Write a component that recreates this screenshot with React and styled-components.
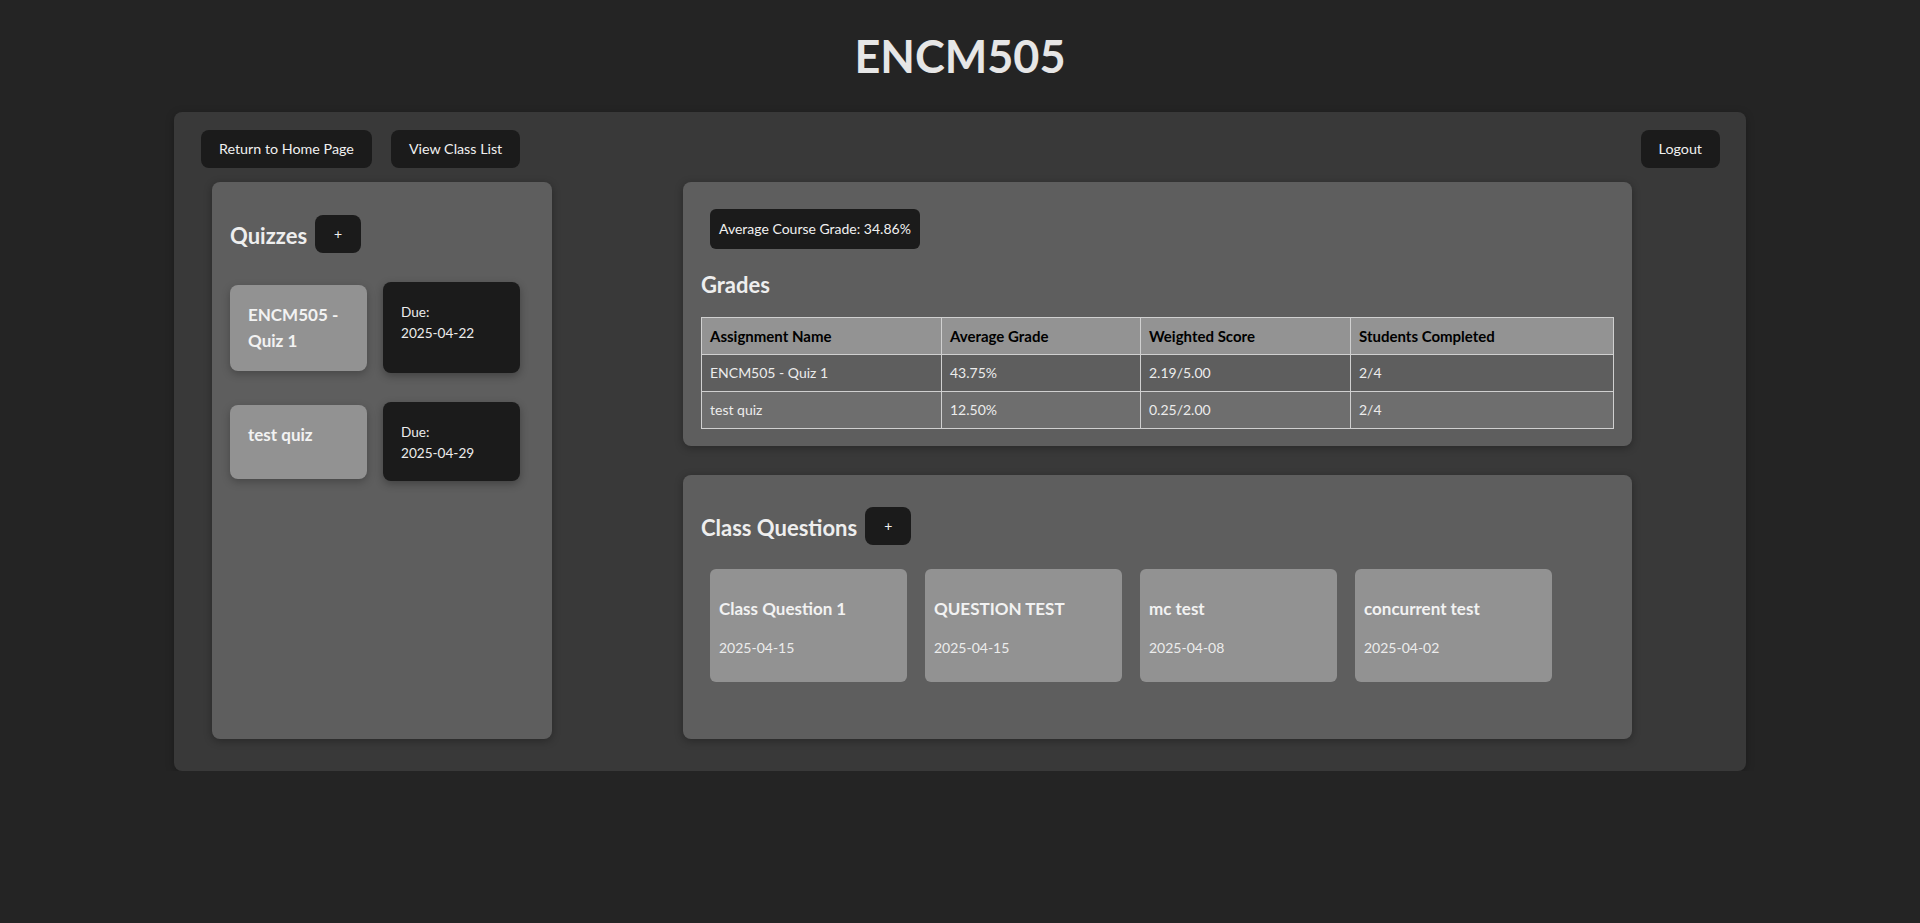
import React from "react";
import styled, { createGlobalStyle } from "styled-components";

const GlobalStyle = createGlobalStyle`
  html, body {
    margin: 0;
    padding: 0;
    background: #242424;
  }
  body {
    font-family: Lato, "Open Sans", Arial, sans-serif;
    color: #e8e8e8;
  }
  * { box-sizing: border-box; }
`;

const Header = styled.header`
  padding-top: 33px;
  height: 112px;
  text-align: center;
`;

const Title = styled.h1`
  margin: 0;
  font-size: 45px;
  line-height: 47px;
  font-weight: 700;
  color: #e6e6e6;
`;

const Shell = styled.main`
  width: 1572px;
  margin: 0 auto;
  background: #393939;
  border-radius: 8px;
  padding: 18px 26px 32px 27px;
  box-shadow: 0 2px 8px rgba(0, 0, 0, 0.25);
`;

const TopBar = styled.div`
  display: flex;
  justify-content: space-between;
  align-items: center;
`;

const ButtonGroup = styled.div`
  display: flex;
  gap: 19px;
`;

const DarkButton = styled.button`
  font-family: inherit;
  font-size: ${(p) => (p.$small ? "14px" : "14.3px")};
  line-height: 20px;
  height: 38px;
  padding: 0 ${(p) => (p.$small ? "19px" : "18px")};
  background: #1b1b1b;
  color: #f0f0f0;
  border: none;
  border-radius: 8px;
  cursor: pointer;
`;

const Content = styled.div`
  display: flex;
  align-items: stretch;
  margin-top: 14px;
  padding-left: 11px;
  gap: 131px;
`;

const Panel = styled.section`
  background: #5e5e5e;
  border-radius: 8px;
  box-shadow: 0 2px 8px rgba(0, 0, 0, 0.3);
`;

const QuizPanel = styled(Panel)`
  width: 340px;
  padding: 33px 18px 18px 18px;
`;

const RightColumn = styled.div`
  width: 949px;
  display: flex;
  flex-direction: column;
  gap: 29px;
`;

const GradesPanel = styled(Panel)`
  padding: 18px 18px 17px 18px;
  display: flex;
  flex-direction: column;
  align-items: flex-start;
`;

const QuestionsPanel = styled(Panel)`
  padding: 32px 18px 48px 18px;
`;

const SectionHeader = styled.div`
  display: flex;
  align-items: center;
  gap: 8px;
`;

const SectionTitle = styled.h2`
  margin: 0;
  padding-top: ${(p) => (p.$inHeader ? "3px" : "0")};
  font-size: 22px;
  line-height: 24px;
  font-weight: 700;
  color: #eeeeee;
`;

const QuizList = styled.div`
  display: flex;
  flex-direction: column;
  gap: 29px;
  margin-top: 29px;
`;

const QuizRow = styled.div`
  display: flex;
  align-items: stretch;
  gap: 16px;
`;

const QuizCard = styled.div`
  width: 137px;
  margin: 2.5px 0;
  padding: 17px 18px;
  background: #929292;
  border-radius: 8px;
  box-shadow: 0 3px 8px rgba(0, 0, 0, 0.25);
`;

const QuizTitle = styled.h3`
  margin: 0;
  font-size: 17px;
  line-height: 26px;
  font-weight: 700;
  color: #f2f2f2;
`;

const DueBox = styled.div`
  width: 137px;
  padding: 20px 18px 17px 18px;
  background: #1b1b1b;
  border-radius: 8px;
  box-shadow: 0 3px 8px rgba(0, 0, 0, 0.3);
  font-size: 13.6px;
  line-height: 21px;
  color: #ececec;
`;

const Line = styled.span`
  display: block;
`;

const AverageBadge = styled.div`
  margin: 9px;
  padding: 10px 9px;
  background: #1b1b1b;
  border-radius: 6px;
  font-size: 14px;
  line-height: 20px;
  color: #f0f0f0;
`;

const GradesTitle = styled(SectionTitle)`
  margin-top: 15px;
  margin-bottom: 20px;
`;

const Table = styled.table`
  width: 100%;
  border-collapse: collapse;
  font-size: 14px;
  line-height: 20px;
`;

const Th = styled.th`
  width: ${(p) => p.$w}px;
  text-align: left;
  padding: 8px;
  background: #939393;
  color: #000;
  font-size: 15px;
  font-weight: 700;
  border: 1px solid #d0d0d0;
`;

const Tr = styled.tr`
  background: ${(p) => (p.$alt ? "#6e6e6e" : "#5e5e5e")};
`;

const Td = styled.td`
  padding: 8px;
  color: #ececec;
  border: 1px solid #d0d0d0;
`;

const CardWrap = styled.div`
  display: flex;
  flex-wrap: wrap;
  margin-top: 15px;
`;

const QuestionCard = styled.div`
  width: 197px;
  margin: 9px;
  padding: 10px 9px;
  background: #929292;
  border-radius: 6px;
`;

const QuestionTitle = styled.h3`
  margin: 18px 0;
  font-size: 17px;
  line-height: 23px;
  font-weight: 700;
  color: #f2f2f2;
`;

const QuestionDate = styled.p`
  margin: 0 0 14px 0;
  font-size: 14px;
  line-height: 20px;
  color: #ececec;
`;

const quizzes = [
  { title: "ENCM505 - Quiz 1", due: "2025-04-22" },
  { title: "test quiz", due: "2025-04-29" },
];

const grades = [
  { name: "ENCM505 - Quiz 1", avg: "43.75%", weighted: "2.19/5.00", done: "2/4" },
  { name: "test quiz", avg: "12.50%", weighted: "0.25/2.00", done: "2/4" },
];

const questions = [
  { title: "Class Question 1", date: "2025-04-15" },
  { title: "QUESTION TEST", date: "2025-04-15" },
  { title: "mc test", date: "2025-04-08" },
  { title: "concurrent test", date: "2025-04-02" },
];

export default function App() {
  return (
    <>
      <GlobalStyle />
      <Header>
        <Title>ENCM505</Title>
      </Header>
      <Shell>
        <TopBar>
          <ButtonGroup>
            <DarkButton>Return to Home Page</DarkButton>
            <DarkButton>View Class List</DarkButton>
          </ButtonGroup>
          <DarkButton>Logout</DarkButton>
        </TopBar>
        <Content>
          <QuizPanel>
            <SectionHeader>
              <SectionTitle $inHeader>Quizzes</SectionTitle>
              <DarkButton $small>+</DarkButton>
            </SectionHeader>
            <QuizList>
              {quizzes.map((q) => (
                <QuizRow key={q.title}>
                  <QuizCard>
                    <QuizTitle>{q.title}</QuizTitle>
                  </QuizCard>
                  <DueBox>
                    <Line>Due:</Line>
                    <Line>{q.due}</Line>
                  </DueBox>
                </QuizRow>
              ))}
            </QuizList>
          </QuizPanel>
          <RightColumn>
            <GradesPanel>
              <AverageBadge>Average Course Grade: 34.86%</AverageBadge>
              <GradesTitle>Grades</GradesTitle>
              <Table>
                <thead>
                  <tr>
                    <Th $w={240}>Assignment Name</Th>
                    <Th $w={199}>Average Grade</Th>
                    <Th $w={210}>Weighted Score</Th>
                    <Th $w={263}>Students Completed</Th>
                  </tr>
                </thead>
                <tbody>
                  {grades.map((g, i) => (
                    <Tr key={g.name} $alt={i % 2 === 1}>
                      <Td>{g.name}</Td>
                      <Td>{g.avg}</Td>
                      <Td>{g.weighted}</Td>
                      <Td>{g.done}</Td>
                    </Tr>
                  ))}
                </tbody>
              </Table>
            </GradesPanel>
            <QuestionsPanel>
              <SectionHeader>
                <SectionTitle $inHeader>Class Questions</SectionTitle>
                <DarkButton $small>+</DarkButton>
              </SectionHeader>
              <CardWrap>
                {questions.map((q) => (
                  <QuestionCard key={q.title}>
                    <QuestionTitle>{q.title}</QuestionTitle>
                    <QuestionDate>{q.date}</QuestionDate>
                  </QuestionCard>
                ))}
              </CardWrap>
            </QuestionsPanel>
          </RightColumn>
        </Content>
      </Shell>
    </>
  );
}
